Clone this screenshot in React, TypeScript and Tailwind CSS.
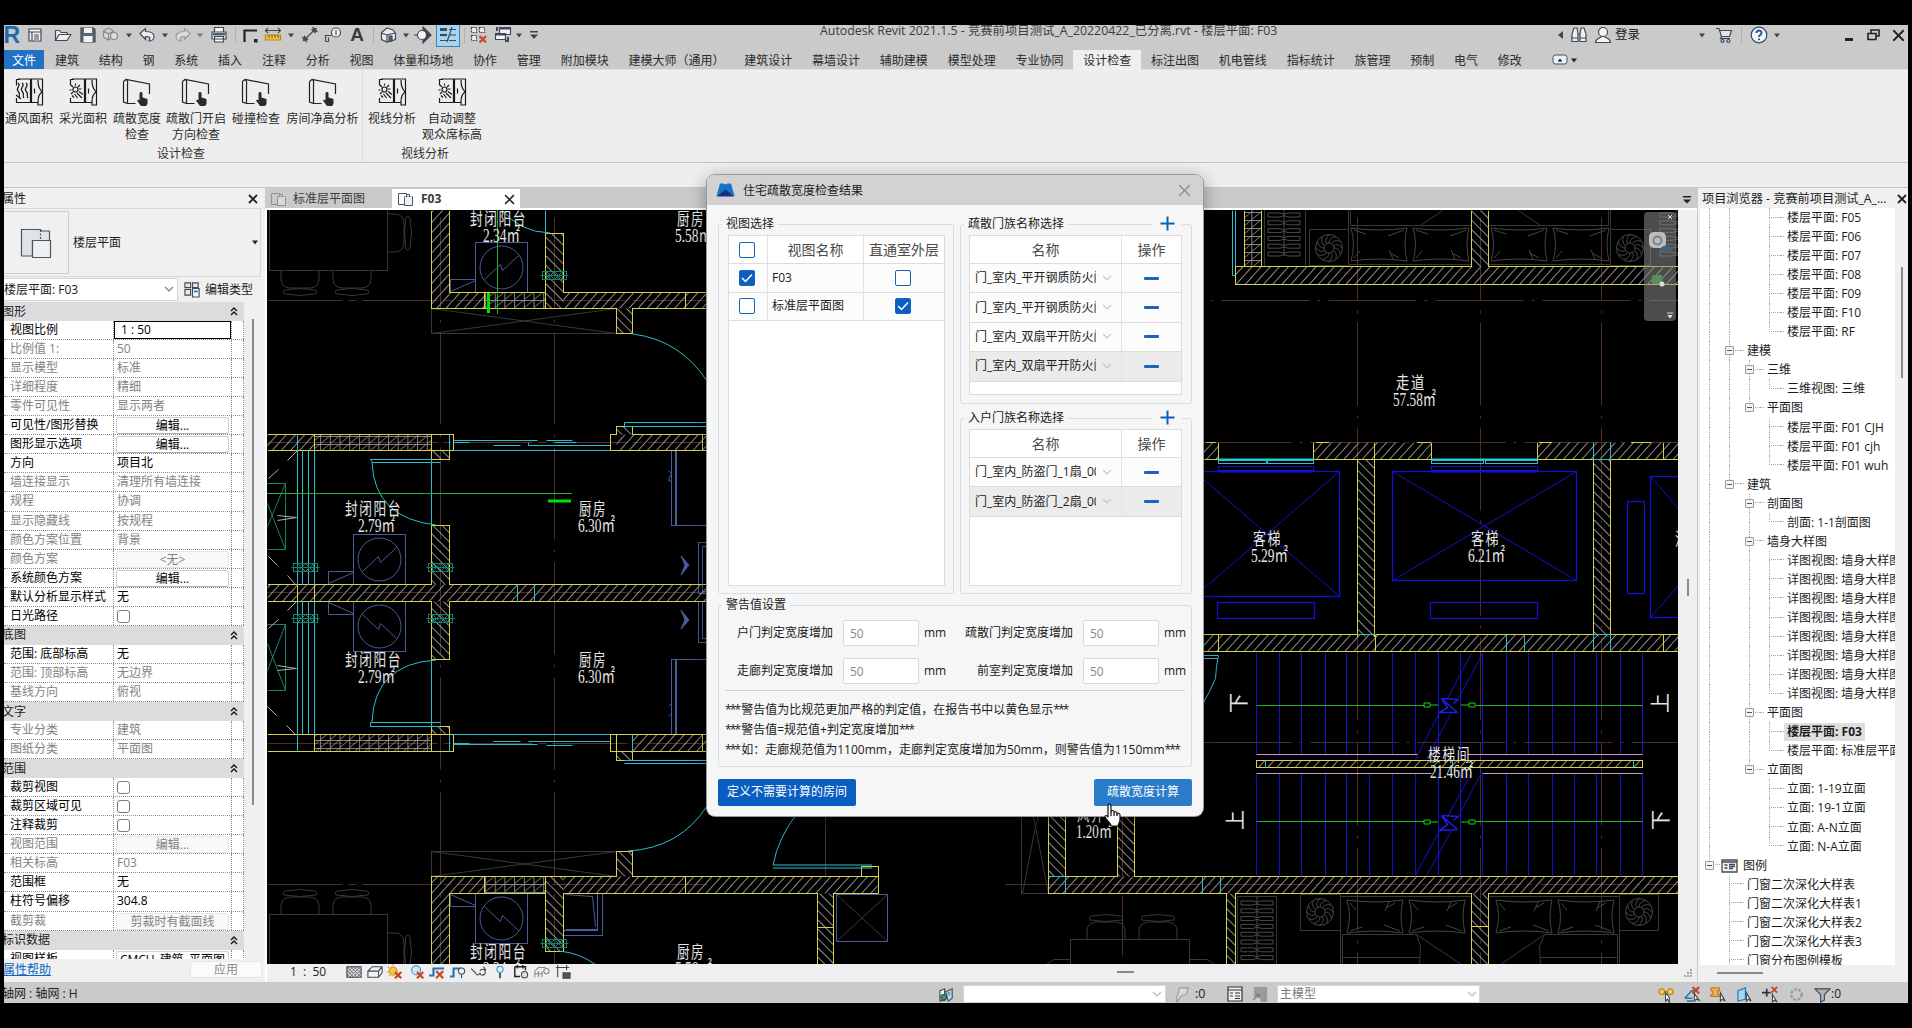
import React from "react";

/* ------------------------------------------------------------------ */
/* Floor plan drawing                                                  */
/* ------------------------------------------------------------------ */

type Zone = "a" | "b" | "c" | "d" | "p";

// origin x, origin y, scale x, scale y of each drawing sheet
const ZONES: Record<Zone, [number, number, number, number]> = {
  a: [264, 180, 3, 3],
  b: [264, 580, 3, 3],
  c: [1200, 180, 3, 3],
  d: [1000, 600, 2.24, 3],
  p: [0, 0, 1, 1],
};

const px = (z: Zone, x: number) => Math.floor(ZONES[z][0] + x / ZONES[z][2]) + 0.5;
const py = (z: Zone, y: number) => Math.floor(ZONES[z][1] + y / ZONES[z][3]) + 0.5;

const YEL = "#dad04e";
const CYAN = "#2fbccf";
const BLUE = "#1212d2";
const SLATE = "#485b9a";
const TEAL = "#178070";
const DIM = "#383838";
const AXIS = "#4f2e24";
const GREEN = "#25b02c";
const PINK = "#cf96cf";

function S({ z, c, d, w = 1, dash }: { z: Zone; c: string; d: string; w?: number; dash?: string }) {
  const path = d
    .split("|")
    .map((poly) =>
      poly
        .trim()
        .split(/\s+/)
        .map((pt, i) => {
          const [x, y] = pt.split(",").map(Number);
          return `${i ? "L" : "M"}${px(z, x)} ${py(z, y)}`;
        })
        .join("")
    )
    .join("");
  return <path d={path} stroke={c} strokeWidth={w} strokeDasharray={dash} strokeLinejoin="bevel" fill="none" />;
}

function H({ z, f, r }: { z: Zone; f: "fwd" | "back" | "grid"; r: string }) {
  return (
    <>
      {r.split("|").map((s, i) => {
        const [x1, y1, x2, y2] = s.split(",").map(Number);
        return (
          <rect
            key={i}
            x={px(z, x1)}
            y={py(z, y1)}
            width={px(z, x2) - px(z, x1)}
            height={py(z, y2) - py(z, y1)}
            fill={`url(#${f})`}
          />
        );
      })}
    </>
  );
}

function R({ z, c, r, w = 1 }: { z: Zone; c: string; r: string; w?: number }) {
  return (
    <>
      {r.split("|").map((s, i) => {
        const [x1, y1, x2, y2] = s.split(",").map(Number);
        return (
          <rect
            key={i}
            x={px(z, x1)}
            y={py(z, y1)}
            width={px(z, x2) - px(z, x1)}
            height={py(z, y2) - py(z, y1)}
            stroke={c}
            strokeWidth={w}
            fill="none"
          />
        );
      })}
    </>
  );
}

function Room({ x, y, name, area, w, aw, ax }: { x: number; y: number; name: string; area: string; w: number; aw: number; ax: number }) {
  return (
    <g fill="#e6e6e6">
      <text x={x} y={y} fontSize="16.5" fontWeight="400" letterSpacing="2" fontFamily='"Noto Sans CJK SC", sans-serif' textLength={w} lengthAdjust="spacingAndGlyphs">
        {name}
      </text>
      <text x={ax} y={y + 17} fontSize="19" fontFamily='"Liberation Serif", "Noto Sans CJK SC", serif' textLength={aw} lengthAdjust="spacingAndGlyphs">
        {area}
      </text>
    </g>
  );
}

function Washer({ cx, cy, flip }: { cx: number; cy: number; flip?: boolean }) {
  return (
    <g stroke={SLATE} fill="none" transform={`translate(${cx} ${cy}) scale(1 ${flip ? -1 : 1})`}>
      <rect x="-26" y="-25" width="52" height="50" />
      <circle r="21.5" />
      <path d="M-17 12L-1 -3L1 3L17 -12" />
      <path d="M-51 12H-26M-51 12V25M-51 24L-26 13" />
    </g>
  );
}

function Valve({ x, y }: { x: number; y: number }) {
  return (
    <g stroke={TEAL} fill="none">
      <rect x={x} y={y} width="24" height="8" />
      <path d={`M${x - 2} ${y + 4}h28M${x + 4} ${y}v8M${x + 20} ${y}v8M${x + 4} ${y}l8 8l8 -8M${x + 4} ${y + 8}l8 -8l8 8`} />
    </g>
  );
}

function Plant({ cx, cy }: { cx: number; cy: number }) {
  return (
    <g stroke="#484848" fill="none">
      <circle cx={cx} cy={cy} r="13.5" />
      <circle cx={cx} cy={cy} r="5" />
      {Array.from({ length: 12 }, (_, i) => {
        const a = (i * Math.PI) / 6;
        return (
          <path
            key={i}
            d={`M${cx + 5 * Math.cos(a)} ${cy + 5 * Math.sin(a)}Q${cx + 10 * Math.cos(a)} ${cy + 10 * Math.sin(a)} ${cx + 13 * Math.cos(a + 0.5)} ${cy + 13 * Math.sin(a + 0.5)}`}
          />
        );
      })}
    </g>
  );
}

function Pillow({ x, y, w = 56, h = 33, flip }: { x: number; y: number; w?: number; h?: number; flip?: boolean }) {
  return (
    <g stroke="#454545" fill="none" transform={flip ? `translate(0 ${2 * y + h}) scale(1 -1)` : undefined}>
      <path d={`M${x} ${y}Q${x + w / 2} ${y + 4} ${x + w} ${y}Q${x + w - 4} ${y + h / 2} ${x + w} ${y + h}Q${x + w / 2} ${y + h - 4} ${x} ${y + h}Q${x + 5} ${y + h / 2} ${x} ${y}`} />
      <path d={`M${x + 3} ${y + 2}l12 4M${x + w - 3} ${y + 2}l-16 6M${x + 3} ${y + h - 3}l6 -7M${x + w - 8} ${y + h - 3}l-9 -5M${x + w - 14} ${y + h - 2}l-4 -9`} />
    </g>
  );
}

function Hangers({ x, y, n }: { x: number; y: number; n: number }) {
  return (
    <g stroke="#4c4c4c" fill="none">
      {Array.from({ length: n }, (_, i) => (
        <path key={i} d={`M${x} ${y + i * 7.8}h12l3 1h2l3 -1h12v4h-12l-3 -1h-2l-3 1h-12z`} />
      ))}
      <path d={`M${x + 16} ${y - 4}v${n * 7.8}`} />
    </g>
  );
}

function Chair({ x, y, rot }: { x: number; y: number; rot: number }) {
  return (
    <g stroke={DIM} fill="none" transform={`translate(${x} ${y}) rotate(${rot})`}>
      <path d="M-19 0V9Q-18 17 -9 17H9Q18 17 19 9V0" />
      <path d="M-16 19Q0 16 16 19Q18 23 14 23Q0 26 -14 23Q-18 23 -16 19" />
    </g>
  );
}

const STEPS = [574, 626, 676, 728, 777, 828, 880, 931, 983, 1031, 1081, 1134, 1184, 1237, 1286, 1336, 1389, 1439];

function FloorPlan() {
  return (
    <svg viewBox="267 210 1411 754" width={1411} height={754} className="block shrink-0 bg-black">
      <defs>
        <pattern id="fwd" width="6.8" height="6.8" patternUnits="userSpaceOnUse" patternTransform="rotate(42)">
          <path d="M0.5 0V7" stroke="#9a9a9a" strokeWidth="0.9" />
        </pattern>
        <pattern id="back" width="6.6" height="6.6" patternUnits="userSpaceOnUse" patternTransform="rotate(-45)">
          <path d="M0.5 0V7" stroke="#9a9a9a" strokeWidth="0.9" />
        </pattern>
        <pattern id="grid" width="9.7" height="8" patternUnits="userSpaceOnUse" patternTransform="translate(0 4)">
          <path d="M0 0.5H9.7M0.5 0V8M0 8L9.7 0" stroke="#909090" strokeWidth="0.9" fill="none" />
        </pattern>
      </defs>

      {/* axis lines */}
      <g>
        <S z="p" c={AXIS} d="440,217 440,964 | 554,217 554,964" dash="92 10 3 10" />
        <S z="p" c={AXIS} d="1357,217 1357,964 | 1480,217 1480,964 | 1601,217 1601,964" dash="83 10 3 9" />
        <S z="p" c={AXIS} d="1210,300 1678,300" dash="3 8 88 8" />
        <S z="p" c={AXIS} d="267,300 707,300 | 267,442 707,442 | 267,592 707,592 | 267,743 707,743 | 267,884 707,884" dash="75 6 8 6" />
        <S z="p" c={AXIS} d="1203,442 1678,442 | 1203,742 1678,742 | 1005,884 1678,884" dash="88 8 3 8" />
        <S z="p" c={AXIS} d="1122,816 1122,964 | 825,816 825,880" dash="60 8 3 8" />
      </g>

      {/* furniture */}
      <g>
        <R z="a" c={DIM} r="16,60,369,272" />
        <Chair x={300} y={271} rot={0} />
        <Chair x={352} y={271} rot={0} />
        <Chair x={387} y={233} rot={-90} />
        <R z="b" c={DIM} r="16,1003,369,1200" />
        <Chair x={300} y={914} rot={180} />
        <Chair x={352} y={914} rot={180} />
        <Chair x={387} y={952} rot={-90} />
        <R z="a" c={DIM} r="502,386,1056,461" />
        <S z="a" c={DIM} d="502,386 1056,461 | 502,461 1056,386" />
        <R z="b" c={DIM} r="502,814,1056,889" />
        <S z="b" c={DIM} d="502,814 1056,889 | 502,889 1056,814" />

        <R z="d" c={DIM} r="48,600,108,880" />
        <S z="d" c={DIM} d="70,640 92,640 | 73,640 80,680 108,880 | 88,640 80,680 50,880" />
        <R z="d" c={DIM} r="159,1018,424,1150" />
        <Chair x={1106} y={939} rot={180} />
        <Chair x={1158} y={939} rot={180} />
        <S z="d" c={DIM} d="104,1092 120,1077 159,1077 | 424,1077 465,1077 480,1092" />

        <R z="c" c={DIM} r="193,80,315,258 | 329,148,446,256 | 446,80,815,254 | 866,80,1232,254 | 1232,148,1352,256" />
        <S z="c" c={DIM} d="452,90 452,137 815,137 | 660,137 726,90 | 866,137 1226,137 1226,90 | 1020,137 955,90" />
        <Hangers x={1268} y={213} n={6} />
        <Plant cx={1329} cy={248} />
        <Plant cx={1630} cy={248} />
        <Pillow x={1351} y={228} />
        <Pillow x={1413} y={228} />
        <Pillow x={1491} y={228} />
        <Pillow x={1553} y={228} />
        <Hangers x={1660} y={213} n={6} />

        <R z="d" c={DIM} r="533,888,619,1150 | 674,882,762,991 | 762,890,1056,1150 | 1094,890,1387,1150 | 1387,882,1475,991" />
        <S z="d" c={DIM} d="767,1092 767,1003 932,1003 943,1040 940,1092 | 932,1003 1033,1092 | 767,1071 940,1071 | 1383,1092 1383,1003 1220,1003 1208,1040 1210,1092 | 1220,1003 1120,1092 | 1210,1071 1383,1071" />
        <Hangers x={1241} y={901} n={8} />
        <Plant cx={1320} cy={912} />
        <Plant cx={1639} cy={912} />
        <Pillow x={1347} y={900} flip />
        <Pillow x={1409} y={900} flip />
        <Pillow x={1496} y={900} flip />
        <Pillow x={1558} y={900} flip />
      </g>

      {/* fixtures */}
      <g>
        <Washer cx={501.5} cy={267.5} />
        <Washer cx={379.5} cy={559.5} />
        <Washer cx={379.5} cy={626.5} flip />
        <Washer cx={501.5} cy={918.5} flip />
        <R z="b" c={SLATE} r="899,940,1015,1066 | 899,940,1001,1050" />
        <S z="b" c={SLATE} d="905,944 985,948 993,1040 | 905,1048 999,1048" />
        <R z="a" c={SLATE} r="1222,811,1237,1037 | 1303,1088,1400,1240 | 1315,1098,1400,1235" />
        <S z="a" c={SLATE} d="1237,1037 1329,1037 | 1212,870 1222,880 1212,900 1222,905 | 1233,811 1233,1037" />
        <R z="b" c={SLATE} r="1222,238,1237,462 | 1303,64,1400,188 | 1315,64,1400,175" />
        <S z="b" c={SLATE} d="1222,238 1329,238 | 1212,380 1222,370 | 1212,410 1222,400 | 1233,238 1233,462" />
        <path d="M681 556l8 9l-8 10l4 -10zM681 610l8 10l-8 9l4 -9z" fill={SLATE} stroke={SLATE} />
        <S z="a" c={TEAL} d="9,911 65,911 65,1108 9,1108 | 9,970 65,1108 | 65,911 9,1040" />
        <S z="b" c={TEAL} d="9,133 65,133 65,330 9,330 | 9,190 65,330 | 65,133 9,270" />
        <S z="a" c="#b0b0b0" d="70,840 100,812 | 12,895 42,867 | 40,1005 98,1012 40,1020 | 12,1130 40,1157 | 70,1185 95,1212" />
        <S z="b" c="#b0b0b0" d="70,92 98,64 | 12,145 42,118 | 40,257 98,264 40,270 | 9,380 38,407 | 68,436 95,462" />
        <R z="p" c={SLATE} r="836,894,887,941" />
        <S z="p" c={DIM} d="836,894 887,941 | 836,941 887,894" />
      </g>

      {/* wall hatching */}
      <g>
        <H z="a" f="fwd" r="502,90,556,386|556,337,662,386|899,337,1500,386|9,763,151,811|1056,763,1329,811" />
        <H z="a" f="back" r="844,160,899,386|1056,386,1106,461|1056,738,1106,763|502,1036,556,1212|502,811,556,838" />
        <H z="a" f="grid" r="662,337,843,386|151,763,502,811" />
        <H z="b" f="fwd" r="9,12,1329,64|1106,463,1329,515|502,889,556,1153|556,889,662,940|899,889,1840,940" />
        <H z="b" f="back" r="502,64,556,238|1056,515,1106,541|1056,814,1106,889|844,889,899,1115|502,440,556,463" />
        <H z="b" f="grid" r="151,463,502,515|662,889,843,940" />
        <H z="c" f="grid" r="133,90,185,260" />
        <H z="c" f="fwd" r="107,260,1434,313|9,787,55,838|341,787,695,838|1011,787,1434,838" />
        <H z="c" f="back" r="815,90,866,260|473,838,523,1370|1180,838,1232,1370" />
        <H z="d" f="fwd" r="455,103,1520,154|574,480,1440,502|108,828,1520,880" />
        <H z="d" f="back" r="108,640,147,828|264,640,302,828|507,880,528,1092|1056,880,1094,1092" />
        <H z="p" f="back" r="817,893,833,964" />
      </g>

      {/* wall outlines */}
      <g shapeRendering="crispEdges">
        <S z="a" c={YEL} d="502,90 502,386 1056,386 1056,461 1106,461 1106,386 1500,386 | 556,90 556,337 843,337 | 899,337 1500,337 | 843,386 843,160 899,160 899,337 | 662,338 662,386 | 1265,338 1265,386" />
        <S z="a" c={YEL} d="9,763 569,763 569,811 9,811 | 151,763 151,811 | 502,763 502,811 | 502,838 556,838 556,811 | 502,811 502,838 | 1040,811 1040,763 1056,763 1056,738 1106,738 1106,763 1329,763 | 1040,811 1329,811 | 1316,763 1316,811 | 502,1212 502,1036 556,1036 556,1212" />
        <S z="b" c={YEL} d="9,12 502,12 | 556,12 1329,12 | 9,64 502,64 502,238 556,238 556,64 1329,64 | 101,12 101,64 | 151,12 151,64" />
        <S z="b" c={YEL} d="9,463 569,463 569,515 9,515 | 151,463 151,515 | 502,440 556,440 556,463 | 502,440 502,515 | 1329,463 1040,463 1040,515 1329,515 | 1056,463 1056,541 1106,541 1106,515 | 1316,463 1316,515" />
        <S z="b" c={YEL} d="502,1153 502,889 1056,889 1056,814 1106,814 1106,889 1842,889 1842,860 | 556,1153 556,940 844,940 844,1115 899,1115 899,940 1659,940 | 662,889 662,940 | 843,889 843,940 | 1265,889 1265,940" />
        <S z="p" c={YEL} d="817,964 817,893 | 833,964 833,893 878,893 878,866 861,866 861,876 | 817,927 833,927" />
        <S z="c" c={YEL} d="133,90 133,260 | 185,90 185,260 | 107,313 107,260 815,260 815,90 | 866,90 866,260 1434,260 | 107,313 1434,313" />
        <S z="c" c={YEL} d="9,838 55,838 55,787 | 341,787 341,838 695,838 695,787 | 523,787 523,1370 | 473,838 473,1370 | 1434,838 1011,838 1011,787 | 1180,838 1180,1370 | 1232,838 1232,1370 | 1390,787 1390,838 | 15,787 45,787 | 345,787 385,787 | 650,787 690,787 | 1015,787 1055,787 | 1290,787 1350,787" />
        <S z="d" c={YEL} d="455,103 801,103 | 840,103 1330,103 | 1368,103 1520,103 | 455,154 1520,154 | 489,103 489,154 | 840,103 840,154 | 1486,103 1486,154" />
        <R z="d" c={YEL} r="574,480,1440,502" />
        <S z="d" c={YEL} d="108,640 108,880 507,880 507,1092 | 147,640 147,828 264,828 264,640 | 302,640 302,828 1520,828 | 528,1092 528,880 1056,880 1056,1092 | 1094,1092 1094,880 1520,880 | 1056,978 1094,978" />
      </g>

      {/* doors and windows */}
      <g>
        <S z="a" c={CYAN} d="844,90 844,160 | 101,763 101,1212 | 116,811 116,1212 | 133,811 133,1212 | 151,811 151,1212 | 502,838 502,1036 | 556,763 556,811" />
        <S z="a" c={CYAN} d="569,780 820,780 | 569,787 615,787 | 687,795 768,795 | 793,787 793,796 1040,796 | 846,781 926,781 | 870,787 938,787 | 569,811 1040,811 | 1080,738 1080,727 1329,727 | 1080,738 1329,738 | 502,838 320,838 325,847 528,847" />
        <path d="M502 210Q520 232 550 233M633 334Q680 340 707 381M372 462Q374 518 436 525" stroke={CYAN} fill="none" />
        <S z="b" c={CYAN} d="101,0 101,12 | 116,0 116,12 | 133,0 133,12 | 151,0 151,12 | 101,64 101,515 | 116,64 116,462 | 133,64 133,462 | 151,64 151,462 | 502,240 502,440 | 556,463 556,515 | 760,12 760,64 | 811,12 811,64 | 1106,463 1106,515" />
        <S z="b" c={CYAN} d="569,463 1040,463 | 569,493 820,493 | 569,489 615,489 | 687,483 768,483 | 793,483 1040,483 | 846,495 926,495 | 1080,540 1329,540 | 1080,549 1329,549 | 320,428 530,428 | 320,438 530,438 | 320,428 320,438" />
        <path d="M372 722Q374 664 436 660M707 806Q680 848 628 851M773 865Q778 838 798 812M773 865H872M773 868H872M559 951Q580 953 596 965" stroke={CYAN} fill="none" />
        <S z="c" c={CYAN} d="97,90 97,287 107,287 | 107,90 107,260 | 1180,787 1180,838 1232,838 1232,787" />
        <S z="c" c="#18cfe4" d="55,838 341,838 | 695,838 1011,838" w={2} />
        <R z="c" c={CYAN} r="55,840,198,850 | 202,840,341,850 | 695,840,850,850 | 856,840,1011,850" />
        <S z="d" c={CYAN} d="801,103 840,103 | 1134,103 1134,154 | 1174,103 1174,154 | 1330,154 1330,103 1368,103 1368,154 | 595,480 595,502 | 1419,480 1419,502 | 1014,480 1014,502 | 108,828 147,828 147,880 | 453,828 453,880 | 494,828 494,880" />
        <S z="d" c={CYAN} d="455,167 489,167 486,200 482,235 470,275 455,307 | 455,175 487,175" />
      </g>

      {/* lifts */}
      <g>
        <R z="c" c={BLUE} r="55,860,341,872 | 695,860,1011,872" />
        <S z="c" c={BLUE} d="55,873 341,873 | 695,873 1011,873" w={2} />
        <R z="c" c={BLUE} w={1.3} r="-18,875,418,1248 | 577,875,1130,1200 | 1350,888,1900,1311 | 1282,963,1334,1240" />
        <S z="c" c={BLUE} d="-18,875 418,1248 | -18,1248 418,875 | 577,875 1130,1200 | 577,1200 1130,875 | 1350,888 1520,1080 | 1350,1311 1520,1120" />
        <R z="d" c={BLUE} w={1.3} r="488,7,704,55 | 965,7,1203,55" />
      </g>

      {/* stairs */}
      <g>
        {STEPS.map((s) => (
          <S key={s} z="d" c={BLUE} d={`${s},158 ${s},463 | ${s},520 ${s},828`} />
        ))}
        <S z="d" c={BLUE} d="1056,160 1003,295 | 1080,160 1028,295 | 1011,338 955,478 | 985,338 931,478 | 1056,520 1003,648 | 1080,512 1028,648 | 1011,690 955,826 | 985,690 931,826" />
        <S z="d" c="#1c1ce6" w={1.6} d="1028,297 990,295 1024,336 | 990,295 1003,322 985,338 1024,336 | 1028,297 1016,310 | 1028,648 990,646 1024,688 | 990,646 1003,673 985,690 1024,688 | 1028,648 1016,661" />
        <S z="d" c={GREEN} d="574,316 950,316 | 1064,316 1440,316 | 574,665 950,665 | 1064,665 1440,665" />
        <path d="M1424 703h6v4h-6zM1469 703h6v4h-6zM1424 820h6v4h-6zM1469 820h6v4h-6zM1430 705h8M1461 705h8M1430 822h8M1461 822h8" stroke="#12d412" fill="none" />
        <S z="d" c={PINK} d="574,463 936,463 | 1048,463 1440,463 | 574,520 966,520 | 1080,520 1440,520" />
      </g>

      {/* valves and section marks */}
      <Valve x={542.5} y={271.5} />
      <Valve x={293.5} y={563.5} />
      <Valve x={428.5} y={563.5} />
      <Valve x={293.5} y={614.5} />
      <Valve x={428.5} y={614.5} />
      <Valve x={542.5} y={939.5} />
      <path d="M267 493.5H572M497.500 210V314" stroke={GREEN} />
      <path d="M548 501H571M488.500 293V313" stroke="#00e000" strokeWidth="3" />

      {/* room labels */}
      <Room x={470} y={225} name="封闭阳台" area="2.34㎡" w={57} ax={483} aw={37} />
      <Room x={677} y={225} name="厨房" area="5.58㎡" w={28} ax={675} aw={37} />
      <Room x={345} y={515} name="封闭阳台" area="2.79㎡" w={57} ax={358} aw={37} />
      <Room x={579} y={515} name="厨房" area="6.30㎡" w={28} ax={578} aw={37} />
      <Room x={345} y={666} name="封闭阳台" area="2.79㎡" w={57} ax={358} aw={37} />
      <Room x={579} y={666} name="厨房" area="6.30㎡" w={28} ax={578} aw={37} />
      <Room x={470} y={958} name="封闭阳台" area="2.34㎡" w={57} ax={483} aw={37} />
      <Room x={677} y={958} name="厨房" area="5.58㎡" w={28} ax={675} aw={37} />
      <Room x={1396} y={389} name="走道" area="57.58㎡" w={30} ax={1393} aw={43} />
      <Room x={1253} y={545} name="客梯" area="5.29㎡" w={29} ax={1251} aw={37} />
      <Room x={1471} y={545} name="客梯" area="6.21㎡" w={29} ax={1468} aw={37} />
      <Room x={1675} y={545} name="消防" area="" w={28} ax={1700} aw={37} />
      <Room x={1428} y={761} name="楼梯间" area="21.46㎡" w={43} ax={1430} aw={43} />
      <Room x={1077} y={821} name="风井" area="1.20㎡" w={28} ax={1076} aw={36} />

      <g fill="#e4e4e4" fontSize="20" fontFamily='"Noto Sans CJK SC", sans-serif'>
        <text transform="translate(1246 713) rotate(-90)">下</text>
        <text transform="translate(1243 830) rotate(-90)">上</text>
        <text transform="translate(1668 713) rotate(-90)">上</text>
        <text transform="translate(1668 830) rotate(-90)">下</text>
      </g>

      {/* navigation bar */}
      <g>
        <rect x="1644" y="212" width="32" height="109" rx="4" fill="#8a8a8a" fillOpacity="0.55" />
        <path d="M1668 215l4 4m0 -4l-4 4M1667 313h6M1668 315.500h4l-2 2.500z" stroke="#d8d8d8" fill="#d8d8d8" />
        <rect x="1649" y="232" width="17" height="16" rx="5" fill="#bdbdbd" />
        <circle cx="1657.500" cy="240.500" r="4" fill="none" stroke="#808080" strokeWidth="2" />
        <path d="M1659 250l4 -4h6l3 3l-3 4h-7z" fill="#42627e" />
        <rect x="1652" y="275" width="10" height="9" fill="#5b8f55" />
        <circle cx="1662" cy="284" r="2.500" fill="#dddddd" />
      </g>
    </svg>
  );
}

/* ------------------------------------------------------------------ */
/* Icons                                                               */
/* ------------------------------------------------------------------ */

function Icon({ children, s = 18, vb = "0 0 18 18", className = "" }: { children: React.ReactNode; s?: number; vb?: string; className?: string }) {
  return (
    <svg width={s} height={s} viewBox={vb} fill="none" stroke="#3f4a56" strokeWidth="1.2" className={`shrink-0 ${className}`}>
      {children}
    </svg>
  );
}

function Caret({ className = "", fill = "#444" }: { className?: string; fill?: string }) {
  return (
    <svg width="8" height="5" viewBox="0 0 8 5" className={`shrink-0 ${className}`}>
      <path d="M1 0.5h6L4 4.500z" fill={fill} />
    </svg>
  );
}

function Chevron({ className = "", c = "#777" }: { className?: string; c?: string }) {
  return (
    <svg width="10" height="7" viewBox="0 0 10 7" className={`shrink-0 ${className}`} fill="none" stroke={c} strokeWidth="1.1">
      <path d="M1 1l4 4l4 -4" />
    </svg>
  );
}

function Cross({ s = 10, c = "#222", w = 1.8, className = "" }: { s?: number; c?: string; w?: number; className?: string }) {
  return (
    <svg width={s} height={s} viewBox="0 0 10 10" className={`shrink-0 ${className}`} stroke={c} strokeWidth={w}>
      <path d="M1 1l8 8M9 1l-8 8" />
    </svg>
  );
}

function WindowIcon({ kind }: { kind: "wave" | "sun" }) {
  return (
    <svg width="30" height="28" viewBox="0 0 30 28" fill="none" stroke="#1a1a1a" strokeWidth="1.2">
      <path d="M6 1.500H2.500v6M2.500 20v4.500H24M4 1h24.500v26H24v-3M16.500 1.500V24M17.500 1.500V24M24 2c0 6 1 8 4 12c-3 2 -4 6 -4 10M20.500 10.500v5" />
      {kind === "wave" ? (
        <path d="M4 5c4 3 -3 5 0 8s0 5 2 7M8 5c4 3 -3 5 0 8s0 5 2 7M12 5c4 3 -3 5 0 8s0 5 2 7M2 17l5 4" />
      ) : (
        <>
          <circle cx="7.500" cy="11.500" r="2.500" />
          <path d="M7.500 5.500v2M3 7l2 2M12 7l-2 2M1.500 12h2M11 11h2.500M3 16l2 -2M6.500 16l3 4M9 15l5 5M11 13.500l4 3M4 17.500l2 2" />
        </>
      )}
    </svg>
  );
}

function DoorIcon() {
  return (
    <svg width="30" height="28" viewBox="0 0 30 28" fill="none" stroke="#222" strokeWidth="1.2">
      <path d="M1.500 3.500v20.500l4 1.500V6M1.500 3.500L4 1.500l23.500 4.500V16M4 1.500c2 1 2 2.500 1.500 5M5.500 25.500h8" />
      <path d="M17.500 15.500c0 -2 3 -2 3 0v4l5 1.500v5l-1.500 2h-5l-4 -5.500c1 -1.500 2.500 0 2.500 0z" fill="#2b2b2b" stroke="none" />
    </svg>
  );
}

function SheetIcon({ dim }: { dim?: boolean }) {
  return (
    <svg width="17" height="15" viewBox="0 0 17 15" fill="none" stroke={dim ? "#8c9196" : "#4b5560"}>
      <path d="M7 12.500H1.500v-11h8v3.500M9.500 2.500h3v2" />
      <path d="M7.500 6.500v-2h8" strokeDasharray="2 1" />
      <path d="M7.500 6.500v7h8v-9" fill={dim ? "#d8dadc" : "#eef2f5"} />
    </svg>
  );
}

/* ------------------------------------------------------------------ */
/* Title bar and ribbon                                                */
/* ------------------------------------------------------------------ */

function Divider({ className = "" }: { className?: string }) {
  return <div className={`h-[17px] w-px shrink-0 bg-[#b2b2b2] ${className}`} />;
}

function TitleBar() {
  return (
    <div className="flex h-[25px] shrink-0 items-center pb-[5px]">
      <span className="flex w-4 shrink-0 justify-end font-['Liberation_Sans'] text-[23px] leading-[20px] font-bold text-[#1f6aa8]">R</span>
      <Icon className="ml-[6px]">
        <path d="M3 3h12v12H3zM3 6h12M6 6v9M8 9h5M8 11h5M8 13h5" fill="#f4f4f4" />
      </Icon>
      <Icon className="ml-[10px]">
        <path d="M1.500 14.500v-10h4l1.500 2h6v2M1.500 14.500l3.500 -6h12l-4 6z" fill="#eceff1" />
      </Icon>
      <Icon className="ml-[7px]">
        <path d="M2 2h12.500l1.500 1.500V16H2z" fill="#5b6670" />
        <path d="M5 2h8v5H5zM4.500 10h9v6h-9z" fill="#f2f2f2" stroke="none" />
      </Icon>
      <Icon className="ml-[5px]">
        <g stroke="#8a8a8a">
          <path d="M1.500 5l5 -3l5 3v6l-5 3l-5 -3zM1.500 5l5 3l5 -3M6.500 8v6" fill="#d8d8d8" />
          <circle cx="12" cy="10" r="3.500" fill="#ddd" />
        </g>
      </Icon>
      <Caret className="ml-[5px]" />
      <Icon className="ml-[5px]">
        <path d="M2 7.500l5.500 -5v3c5 0 8.500 2 8.500 5c0 3 -2.500 4.500 -5 4.500c2 -3 1 -4.500 -3.500 -4.500v3z" fill="#eceff1" />
      </Icon>
      <Caret className="ml-[5px]" />
      <Icon className="ml-[5px]">
        <path d="M16 7.500l-5.500 -5v3c-5 0 -8.500 2 -8.500 5c0 3 2.500 4.500 5 4.500c-2 -3 -1 -4.500 3.500 -4.500v3z" fill="#dcdcdc" stroke="#9a9a9a" />
      </Icon>
      <Caret className="ml-[4px]" fill="#777" />
      <Icon className="ml-[6px]">
        <path d="M4.500 6V1.500h9V6M2 6h14v7H2zM4.500 10.500h9V16h-9z" fill="#f5f5f5" />
        <path d="M3 7h12v2.500H3z" fill="#55606b" stroke="none" />
      </Icon>
      <Divider className="ml-[7px]" />
      <Icon className="ml-[5px]">
        <path d="M3.500 16V4.500H16" stroke="#222" strokeWidth="2.200" />
        <path d="M13 13h3.500v3.500H13z" fill="#222" stroke="none" />
      </Icon>
      <Icon className="ml-[5px]">
        <path d="M1.500 4.500h15M4 2l-2.500 2.500L4 7M14 2l2.500 2.500L14 7" />
        <path d="M1.500 9h15v5h-15z" fill="#f0c742" stroke="#b48a1a" />
        <path d="M5 9v3M8 9v3M11 9v3M14 9v3" stroke="#8a6a10" />
      </Icon>
      <Caret className="ml-[5px]" />
      <Icon className="ml-[6px]">
        <path d="M3 14L14.500 3M1 11l5 5M11.500 1l5 5" />
        <path d="M2.500 14.500l1 -4l3 3zM15 2.500l-1 4l-3 -3z" fill="#3f4a56" />
      </Icon>
      <Icon className="ml-[5px]">
        <circle cx="12" cy="6.500" r="4.500" fill="#f5f5f5" />
        <path d="M12 4v5M1.500 15.500v-6h6M1.500 15.500h3v-4" />
      </Icon>
      <span className="ml-[6px] w-[18px] text-center font-['Liberation_Sans'] text-[19px] leading-5 font-bold text-[#3a3a3a]">A</span>
      <Divider className="ml-[7px]" />
      <Icon className="ml-[5px]">
        <path d="M2 7l6 -5l6 2l2.500 3.500v6L8 16l-5.500 -2.500V7M8 16V9l8 -2M2 7l6 2" fill="#e6eaed" />
        <path d="M10 10h3v5l-3 .5z" fill="#55606b" />
      </Icon>
      <Caret className="ml-[5px]" />
      <Icon className="ml-[4px]">
        <path d="M0 9h4M9 1L17 9l-8 8z" fill="#444" />
        <circle cx="8" cy="9" r="4.500" fill="#f4f4f4" />
      </Icon>
      <div className="ml-[4px] flex h-6 w-6 shrink-0 items-center justify-center border border-[#2d86c4] bg-[#a9d4ef]">
        <Icon>
          <path d="M1 3.500h7" strokeWidth="3" />
          <path d="M1 9h7" strokeWidth="2.200" />
          <path d="M1 14.500h7M10 3.500h7M10 9h7M10 14.500h7M13 1l-5 15" />
        </Icon>
      </div>
      <Divider className="ml-[4px]" />
      <Icon className="ml-[5px]">
        <path d="M1.500 1.500h5v5h-5zM9.500 1.500h5v5h-5zM1.500 9.500h5v5h-5z" fill="#eee" strokeDasharray="2 1" />
        <path d="M9.500 10l6.500 6.500M16 10l-6.500 6.500" stroke="#d04a2c" strokeWidth="2.400" />
      </Icon>
      <Icon className="ml-[6px]">
        <path d="M5.500 1.500h11v7h-11zM1.500 7.500h10v6h-10z" fill="#f4f4f4" />
        <path d="M5.500 2.500h11M1.500 8.500h10M14 11v4h-3M3 1v4" strokeWidth="2" />
      </Icon>
      <Caret className="ml-[3px]" />
      <svg width="8" height="8" viewBox="0 0 8 8" className="ml-[7px] shrink-0">
        <path d="M0 0h8v1.500H0zM0 3.500h8L4 8z" fill="#444" />
      </svg>

      <span className="-mt-[8px] ml-[282px] w-[455px] shrink-0 text-[12.350px] leading-4 whitespace-nowrap text-[#3c3c3c]">
        Autodesk Revit 2021.1.5 - 竞赛前项目测试_A_20220422_已分离.rvt - 楼层平面: F03
      </span>

      <svg width="5" height="8" viewBox="0 0 5 8" className="ml-[283px] shrink-0">
        <path d="M5 0v8L0 4z" fill="#444" />
      </svg>
      <Icon className="ml-[7px]">
        <path d="M2 15.500V8l2 -6h3l1 6v7.500zM16 15.500V8l-2 -6h-3l-1 6v7.500zM8 8h2" fill="#f0f0f0" />
        <path d="M2 12h6M10 12h6" />
      </Icon>
      <Icon className="ml-[6px]">
        <circle cx="9" cy="6" r="4.500" fill="#f4f4f4" />
        <path d="M1.500 16.500c0 -4 4 -4 6 -6h3c2 2 6 2 6 6z" fill="#f4f4f4" />
      </Icon>
      <span className="ml-[3px] w-[26px] text-[12.500px] leading-4 text-[#222]">登录</span>
      <Caret className="ml-[57px]" />
      <Icon className="ml-[9px]">
        <path d="M1 2.500h3l2.500 8h8l2 -6H5" fill="#dfe8f0" />
        <path d="M6.500 10.500l-1 2h9.500" />
        <circle cx="7.500" cy="15" r="1.500" />
        <circle cx="13.500" cy="15" r="1.500" />
      </Icon>
      <Divider className="ml-[8px]" />
      <Icon className="ml-[8px]">
        <circle cx="9" cy="9" r="7.800" fill="#f6f6f6" />
        <path d="M6.500 7c0 -3.500 5 -3.500 5 0c0 2 -2.500 2 -2.500 4M9 12.500v1.800" stroke="#1f5fa8" strokeWidth="2" />
      </Icon>
      <Caret className="ml-[5px]" />
      <div className="mt-2 ml-[64px] h-[3px] w-[8px] shrink-0 bg-[#222]" />
      <svg width="13" height="12" viewBox="0 0 13 12" className="ml-[14px] shrink-0" fill="none" stroke="#222" strokeWidth="1.600">
        <path d="M4 4V1h8v6H9M1 4.500h8v6H1z" />
      </svg>
      <Cross s={13} className="ml-[12px]" w={1.5} />
    </div>
  );
}

const TABS = ["建筑", "结构", "钢", "系统", "插入", "注释", "分析", "视图", "体量和场地", "协作", "管理", "附加模块", "建模大师（通用）", "建筑设计", "幕墙设计", "辅助建模", "模型处理", "专业协同", "设计检查", "标注出图", "机电管线", "指标统计", "族管理", "预制", "电气", "修改"];

function RibbonTabs() {
  return (
    <div className="flex h-[20px] shrink-0 border-b border-[#e2e2e2] text-[12px] leading-[21px] text-[#2b2b2b]">
      <div className="mr-px w-[40px] shrink-0 bg-[#1f72c4] text-center text-white">文件</div>
      {TABS.map((t) => (
        <div key={t} className={`shrink-0 px-[9.900px] whitespace-nowrap ${t === "设计检查" ? "h-[20px] bg-[#efefef]" : ""}`}>
          {t}
        </div>
      ))}
      <svg width="28" height="14" viewBox="0 0 28 14" className="mt-[3px] ml-5">
        <rect x="1" y="2" width="14" height="9" rx="2.500" fill="#e8eef3" stroke="#46525e" />
        <path d="M5.500 8.500h5l-2.500 -3zM19 5.500h6l-3 4z" fill="#222" />
      </svg>
    </div>
  );
}

function RibbonButton({ icon, lines, w }: { icon: React.ReactNode; lines: string[]; w: string }) {
  return (
    <div className={`flex shrink-0 flex-col items-center pt-[8px] ${w}`}>
      {icon}
      <div className="mt-[5px] text-center text-[12px] leading-[16px] whitespace-nowrap text-[#2b2b2b]">
        {lines.map((l) => (
          <div key={l}>{l}</div>
        ))}
      </div>
    </div>
  );
}

function Ribbon() {
  return (
    <div className="flex h-[93px] shrink-0 border-b border-[#c4c4c4] bg-[#eeeeee]">
      <div className="flex w-[359px] shrink-0 flex-col border-r border-[#dcdcdc]">
        <div className="-ml-[2px] flex h-[75px]">
          <RibbonButton w="w-[54px]" icon={<WindowIcon kind="wave" />} lines={["通风面积"]} />
          <RibbonButton w="w-[54px]" icon={<WindowIcon kind="sun" />} lines={["采光面积"]} />
          <RibbonButton w="w-[54px]" icon={<DoorIcon />} lines={["疏散宽度", "检查"]} />
          <RibbonButton w="w-[64px]" icon={<DoorIcon />} lines={["疏散门开启", "方向检查"]} />
          <RibbonButton w="w-[56px]" icon={<DoorIcon />} lines={["碰撞检查"]} />
          <RibbonButton w="w-[77px]" icon={<DoorIcon />} lines={["房间净高分析"]} />
        </div>
        <div className="pt-px pl-[153px] text-[12px] leading-[16px] text-[#333]">设计检查</div>
      </div>
      <div className="flex flex-col">
        <div className="flex h-[75px]">
          <RibbonButton w="w-[58px]" icon={<WindowIcon kind="sun" />} lines={["视线分析"]} />
          <RibbonButton w="w-[62px]" icon={<WindowIcon kind="sun" />} lines={["自动调整", "观众席标高"]} />
        </div>
        <div className="pt-px pl-[38px] text-[12px] leading-[16px] text-[#333]">视线分析</div>
      </div>
    </div>
  );
}

/* ------------------------------------------------------------------ */
/* Properties palette                                                  */
/* ------------------------------------------------------------------ */

type Prop = { h?: string; k?: string; v?: string; dim?: boolean; kind?: "btn" | "check" | "scale" };

const PROPS: Prop[] = [
  { h: "图形" },
  { k: "视图比例", v: "1 : 50", kind: "scale" },
  { k: "比例值 1:", v: "50", dim: true },
  { k: "显示模型", v: "标准", dim: true },
  { k: "详细程度", v: "精细", dim: true },
  { k: "零件可见性", v: "显示两者", dim: true },
  { k: "可见性/图形替换", v: "编辑...", kind: "btn" },
  { k: "图形显示选项", v: "编辑...", kind: "btn" },
  { k: "方向", v: "项目北" },
  { k: "墙连接显示", v: "清理所有墙连接", dim: true },
  { k: "规程", v: "协调", dim: true },
  { k: "显示隐藏线", v: "按规程", dim: true },
  { k: "颜色方案位置", v: "背景", dim: true },
  { k: "颜色方案", v: "<无>", dim: true, kind: "btn" },
  { k: "系统颜色方案", v: "编辑...", kind: "btn" },
  { k: "默认分析显示样式", v: "无" },
  { k: "日光路径", kind: "check" },
  { h: "底图" },
  { k: "范围: 底部标高", v: "无" },
  { k: "范围: 顶部标高", v: "无边界", dim: true },
  { k: "基线方向", v: "俯视", dim: true },
  { h: "文字" },
  { k: "专业分类", v: "建筑", dim: true },
  { k: "图纸分类", v: "平面图", dim: true },
  { h: "范围" },
  { k: "裁剪视图", kind: "check" },
  { k: "裁剪区域可见", kind: "check" },
  { k: "注释裁剪", kind: "check" },
  { k: "视图范围", v: "编辑...", dim: true, kind: "btn" },
  { k: "相关标高", v: "F03", dim: true },
  { k: "范围框", v: "无" },
  { k: "柱符号偏移", v: "304.8" },
  { k: "截剪裁", v: "剪裁时有截面线", dim: true, kind: "btn" },
  { h: "标识数据" },
  { k: "视图样板", v: "CMCU_建筑_平面图", kind: "btn" },
];

function PropRow({ p }: { p: Prop }) {
  if (p.h)
    return (
      <div className="flex h-[19.050px] shrink-0 items-center justify-between bg-[#dcdcdc] pr-[6px]">
        <span className="-ml-[2px]">{p.h}</span>
        <svg width="8" height="9" viewBox="0 0 8 9" fill="none" stroke="#111" strokeWidth="1.300">
          <path d="M1 4l3 -3l3 3M1 8l3 -3l3 3" />
        </svg>
      </div>
    );
  return (
    <div className={`flex h-[19.050px] shrink-0 border-b border-dotted border-[#8d8d8d] ${p.dim ? "text-[#838383]" : "text-black"}`}>
      <div className="w-[110px] shrink-0 overflow-hidden border-r border-dotted border-[#8d8d8d] pl-[6px] leading-[18px] whitespace-nowrap">{p.k}</div>
      <div className="flex w-[118px] shrink-0 border-r border-dotted border-[#8d8d8d]">
        {p.kind === "btn" && (
          <div className={`mx-[2px] mt-[1px] h-[17px] flex-1 overflow-hidden rounded-[3px] border text-center leading-[16px] whitespace-nowrap ${p.dim ? "border-[#e6e6e6] bg-[#f8f8f8]" : "border-[#cfcfcf] border-b-[#b0b0b0] bg-white"}`}>{p.v}</div>
        )}
        {p.kind === "check" && <div className="mt-[3px] ml-[3px] h-[13px] w-[13px] rounded-[3px] border border-[#7b7b7b] bg-white" />}
        {p.kind === "scale" && <div className="h-[18px] flex-1 border border-black pl-[6px] leading-[16px] whitespace-pre">{p.v}</div>}
        {!p.kind && <span className="pl-[3px] leading-[18px]">{p.v}</span>}
      </div>
      <div className="flex-1 border-r border-dotted border-[#8d8d8d]" />
    </div>
  );
}

function PropertiesPalette() {
  return (
    <div className="flex w-[261px] shrink-0 flex-col overflow-hidden bg-[#f0f0f0] text-[12px] text-[#1c1c1c]">
      <div className="flex h-[20px] shrink-0 items-center justify-between pt-[2px] pr-[7px]">
        <span className="-ml-[2px]">属性</span>
        <Cross />
      </div>
      <div className="flex h-[69px] w-[257px] shrink-0 border border-l-0 border-[#d8d8d8] py-[2px]">
        <div className="flex w-[65px] items-center justify-center border border-l-0 border-[#cdcdcd]">
          <svg width="32" height="32" viewBox="0 0 32 32" fill="#dfe4e8" stroke="#4a5560" strokeWidth="1.200">
            <path d="M1.500 2.500h19l1 1.500h8v10h-17v15h-11z" />
            <path d="M12.500 13.500h18v17h-18z" fill="#eef1f4" />
            <path d="M20.500 3v10M12.500 13.500h18" strokeDasharray="2 1.500" />
          </svg>
        </div>
        <span className="mt-px ml-[4px] flex-1 self-center">楼层平面</span>
        <Caret className="mr-[1px] self-center" fill="#222" />
      </div>
      <div className="flex h-[25px] shrink-0 items-center">
        <div className="flex h-[23px] w-[174px] items-center justify-between border border-l-0 border-[#d5d5d5] bg-white pr-[3px]">
          <span>楼层平面: F03</span>
          <Chevron />
        </div>
        <Icon className="ml-[6px]" s={17}>
          <path d="M1 2h6v5H1zM9 2h6v5H9zM1 9h6v6H1z" fill="#e6eaee" />
          <path d="M9 8h7v9H9z" fill="#f6fafc" />
          <path d="M10.500 10h4v2h-4z" fill="#2e7fb8" stroke="none" />
        </Icon>
        <span className="ml-[4px]">编辑类型</span>
      </div>
      <div className="flex h-[657px] shrink-0">
        <div className="flex w-[240px] flex-col overflow-hidden bg-white">
          {PROPS.map((p, i) => (
            <PropRow key={i} p={p} />
          ))}
        </div>
        <div className="mt-[17px] ml-[8px] h-[486px] w-[2px] bg-[#8a8a8a]" />
      </div>
      <div className="flex h-[23px] shrink-0 items-start justify-between pr-[3px]">
        <span className="-ml-[1px] pt-[2px] text-[#0b66c3] underline">属性帮助</span>
        <div className="mt-[2px] h-[17px] w-[72px] rounded-[3px] border border-[#e8e8e8] bg-[#fbfbfb] text-center leading-[16px] text-[#8a8a8a]">应用</div>
      </div>
    </div>
  );
}

/* ------------------------------------------------------------------ */
/* Project browser                                                     */
/* ------------------------------------------------------------------ */

// Guide cells: "|" line, "t" branch, "l" last branch, "+" box, "e" last box, "_" blank
const DETAIL = "详图视图: 墙身大样图";
const TREE: [string, string, boolean?][] = [
  ["||_t", "楼层平面: F05"],
  ["||_t", "楼层平面: F06"],
  ["||_t", "楼层平面: F07"],
  ["||_t", "楼层平面: F08"],
  ["||_t", "楼层平面: F09"],
  ["||_t", "楼层平面: F10"],
  ["||_l", "楼层平面: RF"],
  ["|+", "建模"],
  ["||+", "三维"],
  ["|||l", "三维视图: 三维"],
  ["||e", "平面图"],
  ["||_t", "楼层平面: F01 CJH"],
  ["||_t", "楼层平面: F01 cjh"],
  ["||_l", "楼层平面: F01 wuh"],
  ["|e", "建筑"],
  ["|_+", "剖面图"],
  ["|_|l", "剖面: 1-1剖面图"],
  ["|_+", "墙身大样图"],
  ...Array.from({ length: 8 }, (_, i): [string, string] => [i === 7 ? "|_|l" : "|_|t", DETAIL]),
  ["|_+", "平面图"],
  ["|_|t", "楼层平面: F03", true],
  ["|_|l", "楼层平面: 标准层平面图"],
  ["|_e", "立面图"],
  ["|__t", "立面: 1-19立面"],
  ["|__t", "立面: 19-1立面"],
  ["|__t", "立面: A-N立面"],
  ["|__l", "立面: N-A立面"],
  ["e", "图例"],
  ["_t", "门窗二次深化大样表"],
  ["_t", "门窗二次深化大样表1"],
  ["_t", "门窗二次深化大样表2"],
  ["_t", "门窗二次深化大样表3"],
  ["_t", "门窗分布图例模板"],
];

function GuideCell({ k }: { k: string }) {
  const last = k === "l" || k === "e";
  const branch = k !== "|" && k !== "_";
  return (
    <div className="relative flex w-5 shrink-0">
      <div className="w-[9px]" />
      <div className="flex flex-1 flex-col">
        <div className={`h-1/2 border-dotted border-[#a8a8a8] ${k === "_" ? "" : "border-l"} ${branch ? "border-b" : ""}`} />
        <div className={`h-1/2 border-dotted border-[#a8a8a8] ${k === "_" || last ? "" : "border-l"}`} />
      </div>
      {(k === "+" || k === "e") && (
        <div className="absolute top-[5px] left-[5px] flex h-[9px] w-[9px] items-center justify-center rounded-[1px] border border-[#9a9a9a] bg-[#f4f4f4]">
          <div className="h-px w-[5px] bg-[#3c5a8c]" />
        </div>
      )}
    </div>
  );
}

function ProjectBrowser() {
  return (
    <div className="flex w-[210px] shrink-0 flex-col overflow-hidden bg-[#f0f0f0] text-[12px] text-[#1c1c1c]">
      <div className="flex h-[20px] shrink-0 items-center pt-[2px] pl-[4px]">
        <span className="w-[193px] text-[12.200px] whitespace-nowrap">项目浏览器 - 竞赛前项目测试_A_...</span>
        <Cross className="ml-[2px]" />
      </div>
      <div className="flex h-[757px] shrink-0">
        <div className="ml-[2px] flex w-[195px] flex-col overflow-hidden bg-white">
          {TREE.map(([g, t, sel], i) => (
            <div key={i} className="flex h-[19.050px] shrink-0">
              {g.split("").map((k, j) => (
                <GuideCell key={j} k={k} />
              ))}
              {t === "图例" ? (
                <svg width="17" height="14" viewBox="0 0 17 14" className="mt-[3px] mr-[2px] ml-[1px] shrink-0" fill="#f2f2f2" stroke="#3f4a56" strokeWidth="1.300">
                  <path d="M1 1h15v12H1z" />
                  <path d="M1 3h15M3.500 6h3M3.500 9h3M8 5.500h6M8 7.500h6M8 9.500h4" />
                </svg>
              ) : (
                <div className="h-1/2 w-[4px] shrink-0 border-b border-dotted border-[#a8a8a8]" />
              )}
              <span className={`mt-px px-[3px] leading-[18px] whitespace-nowrap ${sel ? "bg-[#dedede] font-bold" : ""}`}>{t}</span>
            </div>
          ))}
        </div>
        <div className="mt-[59px] ml-[6px] h-[111px] w-[2px] bg-[#8a8a8a]" />
      </div>
      <div className="mt-[7px] ml-[19px] h-[2px] w-[46px] shrink-0 bg-[#8a8a8a]" />
    </div>
  );
}

/* ------------------------------------------------------------------ */
/* Drawing area                                                        */
/* ------------------------------------------------------------------ */

function ViewControlBar() {
  return (
    <div className="flex h-[18px] shrink-0 items-center pb-[2px] pl-[23px]">
      <span className="w-[56px] text-[12px] whitespace-pre text-[#222]">1  :  50</span>
      <Icon s={16}>
        <path d="M1 3h16v12H1z" fill="#ddd" />
        <path d="M1 6l3 -3M1 10l7 -7M1 14l11 -11M4 15L16 3M8 15l9 -9M12 15l5 -5M1 11l4 4M1 7l8 8M1 3l12 12M5 3l12 12M9 3l8 8M13 3l4 4" strokeWidth="0.7" />
      </Icon>
      <Icon s={16} className="ml-[5px]">
        <path d="M1 8l5 -5h11v7l-4 5H1zM1 8h12v7M13 8l4 -5" fill="#f4f4f4" />
      </Icon>
      <Icon s={16} className="ml-[4px]">
        <circle cx="7" cy="8" r="4.500" fill="#f3c548" stroke="#d79a1c" />
        <path d="M7 0v2M1 3l2 2M0 9h2M2 14l2 -2" stroke="#d79a1c" />
        <path d="M9 9l7 7M16 9l-7 7" stroke="#cf3f22" strokeWidth="2.400" />
      </Icon>
      <Icon s={16} className="ml-[6px]">
        <circle cx="8" cy="7" r="5" fill="#cfe6f6" stroke="#3d8fc4" />
        <path d="M9 9l7 7M16 9l-7 7" stroke="#cf3f22" strokeWidth="2.400" />
      </Icon>
      <Icon s={16} className="ml-[4px]">
        <path d="M0 13h5V5h12" stroke="#2476b5" strokeWidth="2.400" />
        <path d="M8 8l8 8M16 8l-8 8" stroke="#cf3f22" strokeWidth="2.400" />
      </Icon>
      <Icon s={16} className="ml-[5px]">
        <path d="M0 14h4V5h9" stroke="#2476b5" strokeWidth="2.400" />
        <circle cx="13" cy="8" r="3.500" fill="#e8f3fa" />
        <path d="M13 12v4" />
      </Icon>
      <Icon s={16} className="ml-[5px]">
        <path d="M0 5l5 5c1 3 4 3 5 0M10 10c1 4 6 3 6 -1s-5 -4 -6 -1M14 3l3 4" />
      </Icon>
      <Icon s={16} className="ml-[5px]">
        <circle cx="9" cy="6" r="3.500" fill="#dff0fb" stroke="#3d8fc4" />
        <path d="M9 10v6" strokeWidth="2" />
      </Icon>
      <Icon s={16} className="ml-[5px]">
        <path d="M2 3h12v4M2 3v11h6M5 1v4M11 1v4" stroke="#222" strokeWidth="1.600" />
        <circle cx="13" cy="12" r="3.500" fill="#ddd" />
      </Icon>
      <Icon s={16} className="ml-[5px]">
        <path d="M1 8l4 -4h8M1 8v7M5 8v7M9 8v7M1 11h9" stroke="#8a8a8a" />
        <circle cx="14" cy="8" r="3" stroke="#8a8a8a" />
      </Icon>
      <Icon s={16} className="ml-[5px]">
        <path d="M1 4h15M3 1v14M13 1v6" />
        <path d="M9 10h8v6H9z" fill="#555" />
      </Icon>
      <div className="ml-[546px] h-[2px] w-[17px] bg-[#8a8a8a]" />
    </div>
  );
}

function DrawingArea() {
  return (
    <div className="flex min-w-0 flex-1 flex-col bg-[#cacaca]">
      <div className="flex h-[20px] shrink-0 items-end pr-[3px] text-[12px] text-[#3a3a3a]">
        <div className="flex h-[19px] w-[127px] items-center gap-[6px] pt-px pl-[5px]">
          <SheetIcon dim />
          <span>标准层平面图</span>
        </div>
        <div className="flex h-[19px] w-[128px] items-center bg-white pt-px pr-[5px] pl-[5px]">
          <SheetIcon />
          <span className="ml-[7px] flex-1 font-bold">F03</span>
          <Cross s={11} w={1.4} />
        </div>
        <div className="flex-1" />
        <svg width="10" height="9" viewBox="0 0 10 9" className="mr-[3px] mb-[4px]">
          <path d="M1 1h8v1.500H1zM1 4.500h8L5 8.500z" fill="#222" />
        </svg>
      </div>
      <div className="mr-[1px] flex flex-col border-t-2 border-l-2 border-white bg-[#efefef]">
        <div className="flex">
          <FloorPlan />
          <div className="flex flex-1 items-center justify-center">
            <div className="h-[17px] w-[2px] bg-[#8a8a8a]" />
          </div>
        </div>
        <div className="flex items-end justify-between">
          <ViewControlBar />
          <svg width="9" height="9" viewBox="0 0 9 9" className="mr-[4px] mb-[4px]" fill="#a5a5a5">
            <path d="M6 0h2v2H6zM3 3h2v2H3zM6 3h2v2H6zM0 6h2v2H0zM3 6h2v2H3zM6 6h2v2H6z" />
          </svg>
        </div>
      </div>
    </div>
  );
}

/* ------------------------------------------------------------------ */
/* Status bar                                                          */
/* ------------------------------------------------------------------ */

function StatusBar() {
  return (
    <div className="flex h-[21px] shrink-0 items-center pt-[3px] text-[12px] text-[#222]">
      <span className="-ml-[2px] w-[936px] whitespace-nowrap">轴网 : 轴网 : H</span>
      <Icon s={17}>
        <path d="M2 5l5 -2v12l-5 1z" fill="#e7f0f6" />
        <path d="M8 6l7 -3v10l-4 3z" fill="#bfe0ec" />
        <circle cx="6" cy="12" r="3" fill="#4f9a4a" />
        <path d="M10 6h3v4h-3z" fill="#56a9c8" stroke="none" />
      </Icon>
      <div className="ml-[8px] flex h-[18px] w-[203px] items-center justify-end border border-[#d6d6d6] bg-white pr-[3px]">
        <Chevron c="#bbb" />
      </div>
      <Icon s={17} className="ml-[8px]">
        <path d="M6 2h9l-2 7l-5 1l-5 7v-5z" fill="#dadada" stroke="#9b9b9b" />
      </Icon>
      <span className="ml-[4px] w-[31px] text-[12.500px]">:0</span>
      <Icon s={18}>
        <path d="M2 2h14v14H2zM2 5h14M4 8h3M4 11h3M9 8h5M9 11h5M9 13.500h5" fill="#f0f0f0" stroke="#333" />
      </Icon>
      <Icon s={17} className="ml-[8px]">
        <path d="M2 1h14v16H9v-5H2z" fill="#9a9a9a" stroke="none" />
        <path d="M1 15l7 -6M8 9v4M8 9H4" stroke="#777" />
      </Icon>
      <div className="ml-[8px] flex h-[18px] w-[203px] items-center justify-between border border-[#d6d6d6] bg-white pr-[2px] pl-[2px] text-[#7a7a7a]">
        <span>主模型</span>
        <Chevron c="#bbb" />
      </div>
      <div className="ml-[178px] flex items-center gap-[9px]">
        <Icon s={17}>
          <circle cx="4" cy="6" r="3" fill="#f3ce55" stroke="#b8860b" />
          <circle cx="13" cy="6" r="3" fill="#f3ce55" stroke="#b8860b" />
          <path d="M7 6h3" stroke="#b8860b" />
          <path d="M8 7v9l2 -2l2 3v-5z" fill="#fff" />
        </Icon>
        <Icon s={17}>
          <path d="M1 13L8 5h6M1 13h8M3 16h7" stroke="#2476b5" strokeWidth="1.600" />
          <path d="M9 1l7 7M16 1l-7 7" stroke="#cf3f22" strokeWidth="2.200" />
          <path d="M11 8v8l2 -2l3 1z" fill="#fff" />
        </Icon>
        <Icon s={17}>
          <path d="M1 2h9v3H8v4h3v2H1V9h2V5H1z" fill="#f0b05a" stroke="#c07a20" />
          <path d="M11 7v9l2 -2l3 2z" fill="#fff" />
        </Icon>
        <Icon s={17}>
          <path d="M2 5l8 -3v12l-8 2z" fill="#a8d3ec" stroke="#2476b5" />
          <path d="M11 7v9l2 -2l3 2z" fill="#fff" />
        </Icon>
        <Icon s={17}>
          <path d="M10 1l6 6M16 1l-6 6" stroke="#cf3f22" strokeWidth="1.800" />
          <path d="M0 7h9M5 3v8" stroke="#333" strokeWidth="1.800" />
          <path d="M11 9v8l2 -2l3 2z" fill="#fff" />
        </Icon>
        <Icon s={17}>
          <circle cx="9" cy="9" r="5.500" stroke="#9c9c9c" strokeWidth="2.600" strokeDasharray="3 1.500" />
        </Icon>
        <div className="flex items-center">
          <Icon s={17}>
            <path d="M1 3h16l-6 6v6l-4 2V9z" fill="#a9b6c0" />
          </Icon>
          <span>:0</span>
        </div>
      </div>
    </div>
  );
}

/* ------------------------------------------------------------------ */
/* Dialog                                                              */
/* ------------------------------------------------------------------ */

function Check({ on }: { on?: boolean }) {
  return (
    <div className={`flex h-[16px] w-[16px] items-center justify-center rounded-[2px] border-[1.500px] border-[#1464b8] ${on ? "bg-[#0c5fc0]" : "bg-white"}`}>
      {on && (
        <svg width="12" height="10" viewBox="0 0 12 10" fill="none" stroke="#fff" strokeWidth="1.500">
          <path d="M1 5l3.500 3.500L11 1.500" />
        </svg>
      )}
    </div>
  );
}

function Group({ title, plus, className, children }: { title: string; plus?: boolean; className: string; children: React.ReactNode }) {
  return (
    <div className={`relative rounded-[3px] border border-[#d3dfe8] ${className}`}>
      <div className="absolute -top-[10px] left-[3px] bg-[#f6f6f6] px-[4px] text-[12px] leading-[18px] whitespace-nowrap">{title}</div>
      {plus && (
        <div className="absolute -top-[10px] right-[9px] flex h-[16px] w-[30px] items-center justify-center bg-[#f6f6f6]">
          <svg width="15" height="15" viewBox="0 0 15 15" stroke="#0c5fc0" strokeWidth="2">
            <path d="M7.500 0.500v14M0.500 7.500h14" />
          </svg>
        </div>
      )}
      {children}
    </div>
  );
}

function DoorTable({ items, className }: { items: string[]; className: string }) {
  return (
    <div className={`flex flex-col border border-[#dcdcdc] bg-white text-[12px] ${className}`}>
      <div className="flex h-[28px] shrink-0 border-b border-[#dcdcdc] text-[14px] leading-[28px] text-[#4a4a4a]">
        <div className="w-[152px] border-r border-[#e2e2e2] text-center">名称</div>
        <div className="flex-1 text-center">操作</div>
      </div>
      {items.map((t, i) => (
        <div key={i} className={`flex h-[29.400px] shrink-0 border-b border-[#dcdcdc] ${i === items.length - 1 ? "bg-[#ebebeb]" : "bg-[#fcfcfc]"}`}>
          <div className="flex w-[152px] items-center border-r border-[#e2e2e2]">
            <div className="ml-[5px] w-[121px] overflow-hidden whitespace-nowrap">{t}</div>
            <Chevron className="ml-[6px]" c="#c4c4c4" />
          </div>
          <div className="flex flex-1 items-center justify-center">
            <div className="h-[3px] w-[15px] rounded-[1px] bg-[#1a66bc]" />
          </div>
        </div>
      ))}
    </div>
  );
}

function Field({ label, lw }: { label: string; lw: string }) {
  return (
    <div className="flex items-center">
      <span className={`text-right ${lw}`}>{label}</span>
      <div className="ml-[10px] h-[26px] w-[76px] rounded-[2px] border border-[#dadada] bg-white pl-[6px] leading-[25px] text-[#8a8a8a]">50</div>
      <span className="ml-[5px] w-[24px]">mm</span>
    </div>
  );
}

function Note({ children }: { children: string }) {
  return (
    <div>
      <span className="tracking-[-1.800px]">***</span>
      <span className="ml-[1.800px]">{children}</span>
      <span className="tracking-[-1.800px]">***</span>
    </div>
  );
}

function Dialog() {
  return (
    <div className="absolute top-[175px] left-[707px] flex h-[641px] w-[496px] flex-col overflow-hidden rounded-[8px] bg-[#f6f6f6] text-[12px] text-[#1a1a1a] shadow-[0_4px_18px_rgba(0,0,0,0.4)] ring-1 ring-[#9a9a9a]">
      <div className="flex h-[30px] shrink-0 items-center bg-[#d2d2d2] pl-[9px]">
        <svg width="19" height="14" viewBox="0 0 19 14">
          <path d="M4 0.500h3.500l2 1l2 -1H15L18.500 13h-3L9.500 7.500L3.500 13H0.500z" fill="#1475cc" />
          <path d="M9.500 6.500L18 13.500H1z" fill="#1b2f7e" />
        </svg>
        <span className="ml-[8px] flex-1 pt-px">住宅疏散宽度检查结果</span>
        <Cross s={13} c="#8a8a8a" w={1} className="mr-[12px]" />
      </div>

      <div className="flex px-[11px] pt-[19px]">
        <Group title="视图选择" className="h-[370px] w-[236px]">
          <div className="mt-[10px] ml-[9px] flex h-[351px] w-[217px] flex-col border border-[#dcdcdc] bg-white">
            <div className="flex h-[28px] shrink-0 border-b border-[#dcdcdc] text-[14px] leading-[28px] text-[#4a4a4a]">
              <div className="flex w-[39px] items-center justify-center border-r border-[#e2e2e2] pr-[3px]">
                <Check />
              </div>
              <div className="w-[96px] border-r border-[#e2e2e2] text-center">视图名称</div>
              <div className="flex-1 text-center whitespace-nowrap">直通室外层</div>
            </div>
            {[
              { n: "F03", a: true, b: false },
              { n: "标准层平面图", a: false, b: true },
            ].map((r) => (
              <div key={r.n} className="flex h-[28.500px] shrink-0 border-b border-[#dcdcdc] bg-[#fcfcfc]">
                <div className="flex w-[39px] items-center justify-center border-r border-[#e2e2e2] pr-[3px]">
                  <Check on={r.a} />
                </div>
                <div className="flex w-[96px] items-center border-r border-[#e2e2e2] pl-[4px] whitespace-nowrap">{r.n}</div>
                <div className="flex flex-1 items-center justify-center pr-[3px]">
                  <Check on={r.b} />
                </div>
              </div>
            ))}
          </div>
        </Group>
        <div className="ml-[6px] flex flex-col gap-[14px]">
          <Group title="疏散门族名称选择" plus className="h-[180px] w-[232px]">
            <DoorTable className="mt-[10px] ml-[8px] h-[160px] w-[213px]" items={["门_室内_平开钢质防火门", "门_室内_平开钢质防火门", "门_室内_双扇平开防火门", "门_室内_双扇平开防火门"]} />
          </Group>
          <Group title="入户门族名称选择" plus className="h-[176px] w-[232px]">
            <DoorTable className="mt-[10px] ml-[8px] h-[157px] w-[213px]" items={["门_室内_防盗门_1扇_001", "门_室内_防盗门_2扇_001"]} />
          </Group>
        </div>
      </div>

      <div className="mt-[11px] px-[11px]">
        <Group title="警告值设置" className="h-[162px] w-[474px]">
          <div className="mt-[14px] flex">
            <div className="flex flex-col gap-[12px]">
              <Field label="户门判定宽度增加" lw="w-[114px]" />
              <Field label="走廊判定宽度增加" lw="w-[114px]" />
            </div>
            <div className="flex flex-col gap-[12px]">
              <Field label="疏散门判定宽度增加" lw="w-[125px]" />
              <Field label="前室判定宽度增加" lw="w-[125px]" />
            </div>
          </div>
          <div className="mt-[6px] ml-[6px] h-px w-[460px] bg-[#cfcfcf]" />
          <div className="mt-[9px] ml-[6px] text-[12px] leading-[20px] whitespace-nowrap">
            <Note>警告值为比规范更加严格的判定值，在报告书中以黄色显示</Note>
            <Note>警告值=规范值+判定宽度增加</Note>
            <Note>如：走廊规范值为1100mm，走廊判定宽度增加为50mm，则警告值为1150mm</Note>
          </div>
        </Group>
      </div>

      <div className="mt-[12px] flex justify-between px-[11px] text-white">
        <div className="h-[27px] w-[138px] rounded-[2px] bg-[#0a5ec2] text-center leading-[26px]">定义不需要计算的房间</div>
        <div className="h-[27px] w-[98px] rounded-[2px] bg-[#2b7bcb] text-center leading-[26px]">疏散宽度计算</div>
      </div>
    </div>
  );
}

function HandCursor() {
  return (
    <svg width="20" height="24" viewBox="0 0 20 24" className="absolute top-[803px] left-[1103px]" fill="#fff" stroke="#111" strokeWidth="1.200" strokeLinejoin="round">
      <path d="M5 14V3c0 -2.500 3 -2.500 3 0v6c0 -2 3 -2 3 0v1c0 -2 3 -1.500 3 .5v1c0 -2 3 -1.500 3 .5v5c0 3 -2 4 -2 6H8c0 -3 -5 -6 -6 -9c0 -1.500 2 -2 3 0z" />
      <path d="M8 9v4M11 10v3M14 11v2" />
    </svg>
  );
}

export default function App() {
  return (
    <div className="relative h-[1028px] w-[1912px] overflow-hidden bg-black pt-[25px] pl-[4px] font-['Open_Sans','Noto_Sans_CJK_SC',sans-serif]">
      <div className="flex h-[978px] w-[1904px] flex-col overflow-hidden bg-[#cacaca]">
        <TitleBar />
        <RibbonTabs />
        <Ribbon />
        <div className="h-[25px] shrink-0 border-b border-[#c4c4c4] bg-[#eeeeee]" />
        <div className="flex h-[794px] shrink-0">
          <PropertiesPalette />
          <DrawingArea />
          <ProjectBrowser />
        </div>
        <StatusBar />
      </div>
      <Dialog />
      <HandCursor />
    </div>
  );
}
